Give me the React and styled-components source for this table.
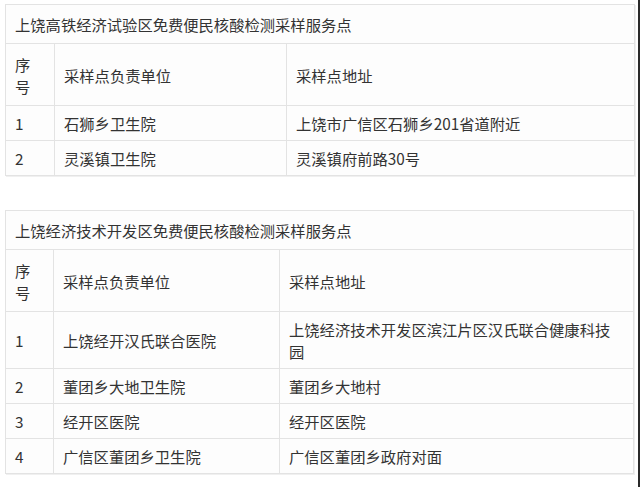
import styled, { createGlobalStyle } from 'styled-components';

const GlobalStyle = createGlobalStyle`
  html, body {
    margin: 0;
    padding: 0;
    background: #ffffff;
  }
  body {
    font-family: "Noto Sans CJK SC", "Noto Sans", sans-serif;
    color: #333333;
  }
`;

const sections = [
  {
    title: '上饶高铁经济试验区免费便民核酸检测采样服务点',
    cols: [49, 232, 348],
    rows: [
      ['1', '石狮乡卫生院', '上饶市广信区石狮乡201省道附近'],
      ['2', '灵溪镇卫生院', '灵溪镇府前路30号'],
    ],
  },
  {
    title: '上饶经济技术开发区免费便民核酸检测采样服务点',
    cols: [48, 226, 354],
    rows: [
      ['1', '上饶经开汉氏联合医院', '上饶经济技术开发区滨江片区汉氏联合健康科技园'],
      ['2', '董团乡大地卫生院', '董团乡大地村'],
      ['3', '经开区医院', '经开区医院'],
      ['4', '广信区董团乡卫生院', '广信区董团乡政府对面'],
    ],
  },
];

const App = () => {
  return (
    <PageDiv>
      <GlobalStyle />
      {sections.map((section, index) => {
        const { title, cols, rows } = section;
        return (
          <SiteTable key={index} $width={cols.reduce((a, b) => a + b, 0)}>
            <colgroup>
              {cols.map((w, i) => (
                <col key={i} style={{ width: w }} />
              ))}
            </colgroup>
            <tbody>
              <tr>
                <TitleCell colSpan={3}>{title}</TitleCell>
              </tr>
              <tr>
                <HeadCell>
                  序<br />号
                </HeadCell>
                <HeadCell>采样点负责单位</HeadCell>
                <HeadCell>采样点地址</HeadCell>
              </tr>
              {rows.map((row, i) => (
                <tr key={i}>
                  {row.map((text, j) => (
                    <BodyCell key={j}>{text}</BodyCell>
                  ))}
                </tr>
              ))}
            </tbody>
          </SiteTable>
        );
      })}
    </PageDiv>
  );
};

export default App;

const PageDiv = styled.div`
  box-sizing: border-box;
  width: 640px;
  height: 487px;
  padding: 4px 6px 0 5px;
  display: flex;
  flex-direction: column;
  gap: 34px;
  border-right: 2px solid #2a2a2a;
  overflow: hidden;
`;

const SiteTable = styled.table`
  width: ${props => props.$width}px;
  table-layout: fixed;
  border-collapse: collapse;
  background: #fdfdfd;
  font-size: 15.3px;
  line-height: 22px;
  box-shadow: 1px 1px 0 #f0f0f0;
`;

const CellBase = styled.td`
  border: 1px solid #e3e3e3;
  padding: 6px 9px;
  text-align: left;
  vertical-align: middle;
  color: #333333;
  font-weight: 400;
  word-break: break-all;
`;

const TitleCell = styled(CellBase)`
  height: 26px;
`;

const HeadCell = styled(CellBase)`
  height: 49px;
`;

const BodyCell = styled(CellBase)`
  height: 22px;
`;
